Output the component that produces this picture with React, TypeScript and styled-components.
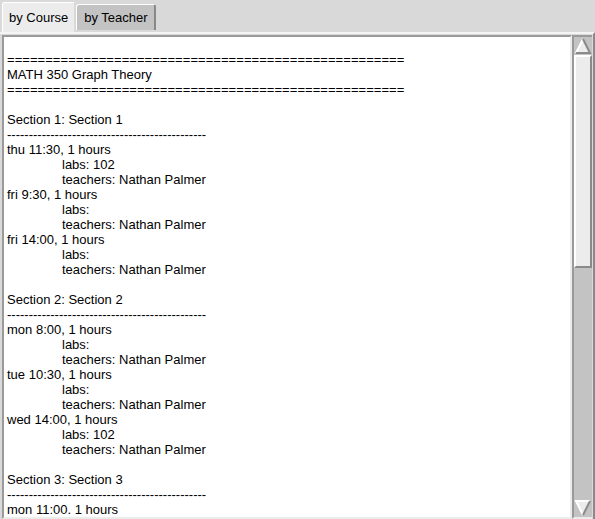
import React from "react";
import styled, { createGlobalStyle } from "styled-components";

const Global = createGlobalStyle`
  html, body { margin: 0; padding: 0; background: #d9d9d9; }
  body { width: 595px; height: 519px; overflow: hidden; font-family: "Liberation Sans", Arial, sans-serif; }
`;

const Window = styled.div`
  width: 595px;
  height: 519px;
  display: flex;
  flex-direction: column;
  background: #d9d9d9;
  box-sizing: border-box;
`;

const TabBar = styled.div`
  display: flex;
  align-items: flex-end;
  height: 32px;
  padding-left: 2px;
  gap: 0;
`;

const Tab = styled.div<{ $active?: boolean }>`
  box-sizing: border-box;
  height: ${(p) => (p.$active ? "30px" : "26px")};
  margin-bottom: ${(p) => (p.$active ? "0" : "2px")};
  padding: 0 ${(p) => (p.$active ? "6px" : "6px")} 0 ${(p) => (p.$active ? "6px" : "7px")};
  display: flex;
  align-items: center;
  font-size: 13px;
  color: #000;
  background: ${(p) => (p.$active ? "#ececec" : "#c3c3c3")};
  border-top: 1px solid #ffffff;
  border-left: 1px solid #ffffff;
  border-right: 2px solid ${(p) => (p.$active ? "#d9d9d9" : "#888888")};
  border-radius: 3px 3px 0 0;
`;

const Pane = styled.div`
  flex: 1;
  display: flex;
  box-sizing: border-box;
  border-top: 2px solid #f4f4f4;
  border-right: 2px solid #8a8a8a;
  padding: 1px 1px 0 2px;
  min-height: 0;
`;

const TextArea = styled.div`
  flex: 1;
  box-sizing: border-box;
  background: #ffffff;
  border-top: 2px solid #9a9a9a;
  border-left: 2px solid #9a9a9a;
  border-bottom: 2px solid #ececec;
  border-right: 2px solid #ececec;
  padding: 0 0 0 3px;
  overflow: hidden;
  font-size: 13px;
  line-height: 15px;
  color: #000;
  white-space: pre;
`;

const Line = styled.div<{ $indent?: boolean }>`
  height: 15px;
  padding-left: ${(p) => (p.$indent ? "55px" : "0")};
`;

const Rule = styled.div<{ $char: "=" | "-" }>`
  height: 15px;
  letter-spacing: ${(p) => (p.$char === "=" ? "0.05px" : "0px")};
`;

const ScrollBar = styled.div`
  width: 20px;
  box-sizing: border-box;
  display: flex;
  flex-direction: column;
  background: #c3c3c3;
  border-left: 2px solid #9a9a9a;
  border-top: 2px solid #9a9a9a;
  border-bottom: 2px solid #ececec;
`;

const Arrow = styled.svg`
  display: block;
  width: 18px;
  height: 18px;
  flex: none;
`;

const Thumb = styled.div`
  height: 213px;
  box-sizing: border-box;
  background: #ececec;
  border-top: 2px solid #ffffff;
  border-left: 2px solid #ffffff;
  border-right: 2px solid #8a8a8a;
  border-bottom: 2px solid #8a8a8a;
`;

const Trough = styled.div`
  flex: 1;
`;

type L = { t: string; i?: boolean; r?: "=" | "-" };

const eq = "=".repeat(52);
const dash = "-".repeat(46);

const lines: L[] = [
  { t: "" },
  { t: eq, r: "=" },
  { t: "MATH 350 Graph Theory" },
  { t: eq, r: "=" },
  { t: "" },
  { t: "Section 1: Section 1" },
  { t: dash, r: "-" },
  { t: "thu 11:30, 1 hours" },
  { t: "labs: 102", i: true },
  { t: "teachers: Nathan Palmer", i: true },
  { t: "fri 9:30, 1 hours" },
  { t: "labs:", i: true },
  { t: "teachers: Nathan Palmer", i: true },
  { t: "fri 14:00, 1 hours" },
  { t: "labs:", i: true },
  { t: "teachers: Nathan Palmer", i: true },
  { t: "" },
  { t: "Section 2: Section 2" },
  { t: dash, r: "-" },
  { t: "mon 8:00, 1 hours" },
  { t: "labs:", i: true },
  { t: "teachers: Nathan Palmer", i: true },
  { t: "tue 10:30, 1 hours" },
  { t: "labs:", i: true },
  { t: "teachers: Nathan Palmer", i: true },
  { t: "wed 14:00, 1 hours" },
  { t: "labs: 102", i: true },
  { t: "teachers: Nathan Palmer", i: true },
  { t: "" },
  { t: "Section 3: Section 3" },
  { t: dash, r: "-" },
  { t: "mon 11:00. 1 hours" },
];

export default function App() {
  return (
    <Window>
      <Global />
      <TabBar>
        <Tab $active>by Course</Tab>
        <Tab>by Teacher</Tab>
      </TabBar>
      <Pane>
        <TextArea>
          {lines.map((l, k) =>
            l.r ? (
              <Rule key={k} $char={l.r}>
                {l.t}
              </Rule>
            ) : (
              <Line key={k} $indent={l.i}>
                {l.t}
              </Line>
            )
          )}
        </TextArea>
        <ScrollBar>
          <Arrow viewBox="0 0 18 18">
            <polygon points="9,2 16,16 2,16" fill="#ececec" />
            <polyline points="2,16 9,2" stroke="#ffffff" strokeWidth="2" fill="none" />
            <polyline points="9,2 16,16 2,16" stroke="#8a8a8a" strokeWidth="2" fill="none" />
          </Arrow>
          <Thumb />
          <Trough />
          <Arrow viewBox="0 0 18 18">
            <polygon points="2,2 16,2 9,16" fill="#ececec" />
            <polyline points="9,16 2,2 16,2" stroke="#ffffff" strokeWidth="2" fill="none" />
            <polyline points="16,2 9,16" stroke="#8a8a8a" strokeWidth="2" fill="none" />
          </Arrow>
        </ScrollBar>
      </Pane>
    </Window>
  );
}
